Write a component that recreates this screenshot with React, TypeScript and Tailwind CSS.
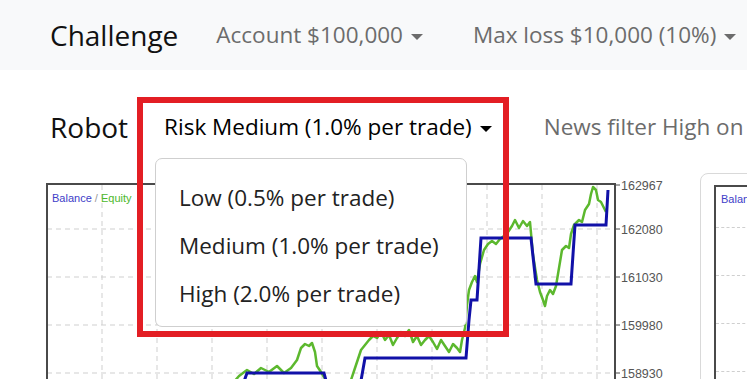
import React from 'react';

const green: [number, number][] = [
  [228, 390], [240, 376], [248, 370], [255, 374], [262, 368], [270, 372], [278, 366], [285, 373],
  [292, 368], [298, 360], [302, 348], [306, 344], [310, 346], [313, 343], [316, 352], [318, 366],
  [322, 372], [328, 382], [350, 386], [356, 368], [362, 350], [366, 345], [370, 340], [374, 336],
  [378, 338], [382, 332], [386, 340], [390, 335], [394, 345], [398, 338], [402, 332], [406, 336],
  [410, 330], [414, 342], [418, 336], [422, 345], [426, 340], [430, 336], [434, 342], [438, 349],
  [442, 340], [446, 346], [450, 352], [454, 344], [458, 348], [461, 352], [463, 340], [466, 328],
  [468, 305], [470, 290], [473, 282], [476, 276], [478, 282], [481, 264], [485, 250], [489, 244],
  [493, 241], [497, 244], [501, 239], [505, 236], [509, 232], [513, 226], [516, 220], [520, 228],
  [524, 221], [528, 226], [531, 222], [534, 255], [538, 280], [541, 292], [544, 300], [546, 306],
  [548, 296], [551, 290], [554, 294], [557, 286], [560, 268], [563, 250], [567, 246], [570, 248],
  [572, 234], [575, 225], [580, 220], [583, 222], [586, 210], [590, 204], [592, 194], [594, 187],
  [597, 190], [599, 200], [602, 202], [605, 208], [607, 212],
];

const blue: [number, number][] = [
  [242, 390], [248, 373], [325, 373], [330, 392], [360, 392], [366, 358], [467, 358], [470, 320],
  [472, 300], [478, 300], [482, 238], [532, 238], [537, 284], [572, 284], [576, 225], [607, 225],
  [609, 190],
];

// page coords -> svg coords (svg sits at x 47, y 173)
const X = (x: number) => x - 47;
const Y = (y: number) => y - 173;
const pts = (a: [number, number][]) => a.map(([x, y]) => `${X(x)},${Y(y)}`).join(' ');

const gridX = [103, 158, 213, 268, 323, 378, 433, 488, 543, 598];
const gridY = [229, 277, 325, 373];
const labels = [
  { y: 185, v: '162967' },
  { y: 229, v: '162080' },
  { y: 277, v: '161030' },
  { y: 325, v: '159980' },
  { y: 373, v: '158930' },
];

function Caret({ dark }: { dark?: boolean }) {
  return (
    <span
      className={`inline-block ml-[8px] w-0 h-0 border-x-[6px] border-x-transparent border-t-[6px] align-middle ${
        dark ? 'border-t-black' : 'border-t-[#6c6c6c]'
      }`}
    />
  );
}

function Chart() {
  return (
    <svg width="640" height="221" className="block">
      {gridY.map((y) => (
        <line key={y} x1={1} x2={569} y1={Y(y)} y2={Y(y)} stroke="#cfcfcf" strokeDasharray="5 4" />
      ))}
      {gridX.map((x) => (
        <line key={x} x1={X(x)} x2={X(x)} y1={Y(185)} y2={221} stroke="#cfcfcf" strokeDasharray="5 4" />
      ))}
      <polyline points={pts(green)} fill="none" stroke="#5cb82e" strokeWidth="2.5" strokeLinejoin="round" />
      <polyline points={pts(blue)} fill="none" stroke="#1111a8" strokeWidth="3" />
      <path d={`M1 221 V${Y(184)} H569 V221`} fill="none" stroke="#4a4a4a" strokeWidth="2" />
      {labels.map((l) => (
        <g key={l.v}>
          <line x1={569} x2={574} y1={Y(l.y)} y2={Y(l.y)} stroke="#4a4a4a" />
          <text x={575} y={Y(l.y) + 5} fontSize="12.5" fill="#555" fontFamily="Liberation Sans, Arial, sans-serif">
            {l.v}
          </text>
        </g>
      ))}
      <text x={6} y={Y(202)} fontSize="11" fontFamily="Liberation Sans, Arial, sans-serif">
        <tspan fill="#4040c8">Balance</tspan>
        <tspan fill="#999"> / </tspan>
        <tspan fill="#4cb82a">Equity</tspan>
      </text>
    </svg>
  );
}

export default function App() {
  return (
    <div className="relative w-[747px] h-[379px] overflow-hidden bg-white font-['Open_Sans',sans-serif]">
      <div className="h-[70px] bg-[#f8f9fa] flex items-center pl-[50px] whitespace-nowrap">
        <span className="text-[28px] text-[#111] mr-[38px]">Challenge</span>
        <span className="text-[22.5px] text-[#6c6c6c] mr-[50px]">
          Account $100,000
          <Caret />
        </span>
        <span className="text-[22.5px] text-[#6c6c6c]">
          Max loss $10,000 (10%)
          <Caret />
        </span>
      </div>

      <div className="mt-[30px] h-[54px] flex items-center pl-[50px] whitespace-nowrap">
        <span className="text-[28px] text-[#111] mr-[36px]">Robot</span>
        <span className="text-[22.5px] text-black mr-[52px]">
          Risk Medium (1.0% per trade)
          <Caret dark />
        </span>
        <span className="text-[22.5px] text-[#6c6c6c]">News filter High on</span>
      </div>

      <div className="mt-[19px] flex">
        <div className="w-[700px] shrink-0 pl-[46px]">
          <Chart />
        </div>
        <div className="flex-1 h-[240px] border border-[#d9d9d9] rounded-[8px] pl-[13px] pt-[11px]">
          <div className="h-[230px] border-l-2 border-t-2 border-[#4a4a4a]">
            <div className="text-[11px] text-[#4040c8] pl-[5px] pt-[4px] font-['Liberation_Sans',sans-serif]">Balance</div>
            <div className="mt-[19px] border-t border-dashed border-[#cfcfcf]" />
            <div className="mt-[47px] border-t border-dashed border-[#cfcfcf]" />
            <div className="mt-[47px] border-t border-dashed border-[#cfcfcf]" />
            <div className="mt-[47px] border-t border-dashed border-[#cfcfcf]" />
          </div>
        </div>
      </div>

      <div className="absolute left-[155px] top-[158px] w-[312px] h-[169px] bg-white border border-[#cfcfcf] rounded-[7px] pt-[15px] text-[22.5px] text-[#222]">
        {['Low (0.5% per trade)', 'Medium (1.0% per trade)', 'High (2.0% per trade)'].map((t) => (
          <div key={t} className="h-[48px] flex items-center pl-[23px] whitespace-nowrap">
            {t}
          </div>
        ))}
      </div>

      <div className="absolute left-[137px] top-[97px] w-[372px] h-[240px] border-[6px] border-[#e31e24] pointer-events-none" />
    </div>
  );
}
